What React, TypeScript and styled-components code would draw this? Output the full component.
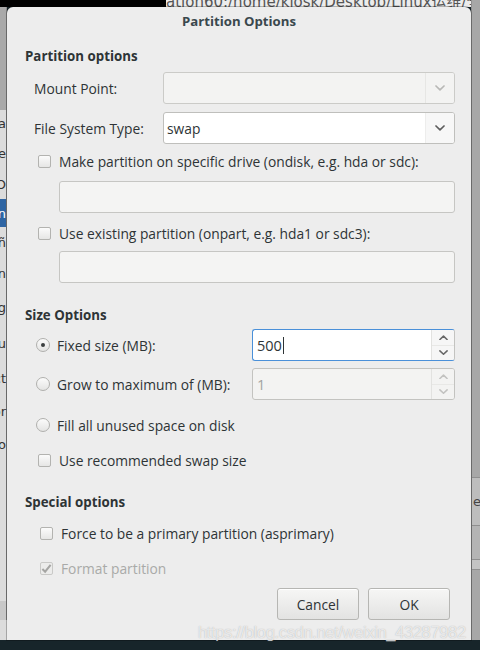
import React from 'react';
import styled, { createGlobalStyle, css } from 'styled-components';

const GlobalStyle = createGlobalStyle`
  html, body {
    margin: 0;
    padding: 0;
    background: #17252a;
  }
  * {
    box-sizing: border-box;
  }
`;

const Desktop = styled.div`
  position: relative;
  width: 480px;
  height: 650px;
  overflow: hidden;
  background: #17252a;
  font-family: 'Open Sans', 'DejaVu Sans', sans-serif;
  color: #2e3436;
`;

/* windows behind the dialog */
const TopStrip = styled.div`
  position: absolute;
  left: 0;
  top: 0;
  width: 480px;
  height: 7px;
  overflow: hidden;
  background: #ececec;
  display: flex;
`;

const BlackCorner = styled.div`
  width: 166px;
  height: 7px;
  background: #000;
  flex: none;
`;

const BackTitle = styled.div`
  margin-top: -10px;
  font-family: 'DejaVu Sans', 'Noto Sans CJK SC', sans-serif;
  font-size: 15px;
  color: #555;
  white-space: nowrap;
`;

const LeftWindow = styled.div`
  position: absolute;
  left: 0;
  top: 7px;
  width: 7px;
  height: 633px;
  background: #dcdcdc;
  display: flex;
  flex-direction: column;
  overflow: hidden;
  font-family: 'DejaVu Sans', sans-serif;
  font-size: 13px;
`;

const LeftCell = styled.div<{ $h: number; $bg?: string; $fg?: string }>`
  height: ${({ $h }) => $h}px;
  flex: none;
  background: ${({ $bg }) => $bg || 'transparent'};
  color: ${({ $fg }) => $fg || '#333'};
  display: flex;
  align-items: center;
  justify-content: flex-end;
  line-height: 1;
  border-right: 1px solid #8c8c8c;
`;

const RightWindow = styled.div`
  position: absolute;
  left: 471px;
  top: 0;
  width: 9px;
  height: 640px;
  background: #a7a7a7;
  border-left: 1px solid #8e8e8e;
  display: flex;
  flex-direction: column;
`;

const RightCell = styled.div<{ $h: number; $bg?: string }>`
  height: ${({ $h }) => $h}px;
  flex: none;
  background: ${({ $bg }) => $bg || 'transparent'};
  border-bottom: 1px solid #8f8f8f;
  font-family: 'DejaVu Sans', sans-serif;
  font-size: 13px;
  color: #444;
  display: flex;
  align-items: center;
  padding-left: 1px;
`;

/* the dialog itself */
const Dialog = styled.div`
  position: absolute;
  left: 7px;
  top: 7px;
  width: 464px;
  height: 633px;
  background: #ededed;
  border-radius: 6px 6px 0 0;
  box-shadow: 0 0 0 1px rgba(0, 0, 0, 0.25);
  display: flex;
  flex-direction: column;
`;

const TitleBar = styled.div`
  height: 26px;
  flex: none;
  display: flex;
  align-items: center;
  justify-content: center;
  font-family: 'Open Sans', sans-serif;
  font-weight: 700;
  font-size: 13.2px;
  color: #3a484d;
  padding-top: 1px;
`;

const Body = styled.div`
  display: flex;
  flex-direction: column;
  padding: 0 16px 0 18px;
  font-size: 13.8px;
`;

const SectionHeader = styled.div<{ $top: number }>`
  height: 20px;
  margin-top: ${({ $top }) => $top}px;
  display: flex;
  align-items: center;
  font-weight: 700;
  font-size: 13.3px;
  color: #2e3436;
`;

const FieldRow = styled.div<{ $top: number }>`
  height: 32px;
  margin-top: ${({ $top }) => $top}px;
  display: flex;
  align-items: center;
`;

const FieldLabel = styled.div<{ $width: number }>`
  width: ${({ $width }) => $width}px;
  flex: none;
  padding-left: 9px;
`;

const CheckRow = styled.div<{ $top: number; $indent?: number; $disabled?: boolean }>`
  height: 20px;
  margin-top: ${({ $top }) => $top}px;
  padding-left: ${({ $indent }) => $indent ?? 13}px;
  display: flex;
  align-items: center;
  gap: 8px;
  color: ${({ $disabled }) => ($disabled ? '#a9aaa8' : '#2e3436')};
`;

const CheckBox = styled.span<{ $disabled?: boolean }>`
  width: 13px;
  height: 13px;
  flex: none;
  border: 1px solid #b3b3b0;
  border-radius: 2px;
  background: linear-gradient(#fbfbfb, #e6e6e5);
  display: flex;
  align-items: center;
  justify-content: center;
  ${({ $disabled }) =>
    $disabled &&
    css`
      border-color: #c9c9c7;
      background: #ececeb;
    `}
`;

const Radio = styled.span`
  width: 14px;
  height: 14px;
  flex: none;
  border: 1px solid #b0b0ad;
  border-radius: 50%;
  background: linear-gradient(#fbfbfb, #e4e4e3);
  display: flex;
  align-items: center;
  justify-content: center;
  margin-left: -1px;
  margin-right: -1px;
`;

const RadioDot = styled.span`
  width: 4px;
  height: 4px;
  border-radius: 50%;
  background: #3b3f40;
`;

const Combo = styled.div<{ $disabled?: boolean }>`
  flex: 1;
  height: 32px;
  display: flex;
  border: 1px solid #bfbfbc;
  border-radius: 3px;
  background: ${({ $disabled }) => ($disabled ? '#f3f3f2' : '#ffffff')};
  ${({ $disabled }) => $disabled && css`border-color: #cbcbc8;`}
`;

const ComboText = styled.div`
  flex: 1;
  display: flex;
  align-items: center;
  padding-left: 3px;
`;

const ComboButton = styled.div<{ $disabled?: boolean }>`
  width: 29px;
  flex: none;
  border-left: 1px solid ${({ $disabled }) => ($disabled ? '#e6e6e4' : '#ededec')};
  display: flex;
  align-items: center;
  justify-content: center;
  color: ${({ $disabled }) => ($disabled ? '#b8b8b6' : '#5d5d5d')};
  background: ${({ $disabled }) => ($disabled ? '#f3f3f2' : '#f7f7f7')};
  border-radius: 0 2px 2px 0;
`;

const Entry = styled.div<{ $top: number }>`
  height: 32px;
  margin-top: ${({ $top }) => $top}px;
  margin-left: 34px;
  border: 1px solid #c6c6c3;
  border-radius: 3px;
  background: #f4f4f3;
`;

const RadioRow = styled.div<{ $top: number; $h?: number }>`
  height: ${({ $h }) => $h ?? 32}px;
  margin-top: ${({ $top }) => $top}px;
  display: flex;
  align-items: center;
`;

const RadioLabel = styled.div`
  width: 227px;
  flex: none;
  padding-left: 12px;
  display: flex;
  align-items: center;
  gap: 8px;
`;

const Spin = styled.div<{ $focused?: boolean }>`
  flex: 1;
  height: 32px;
  display: flex;
  border-radius: 3px;
  border: 1px solid #c3c3c0;
  background: ${({ $focused }) => ($focused ? '#ffffff' : '#f3f3f2')};
  ${({ $focused }) =>
    $focused &&
    css`
      border-color: #4a90d9 #c3c3c0 #4a90d9 #4a90d9;
    `}
`;

const SpinText = styled.div<{ $disabled?: boolean }>`
  flex: 1;
  display: flex;
  align-items: center;
  padding-left: 4px;
  font-size: 14.5px;
  color: ${({ $disabled }) => ($disabled ? '#a3a3a1' : '#2e3436')};
`;

const Caret = styled.span`
  width: 1px;
  height: 17px;
  background: #2e3436;
  margin-left: 1px;
`;

const SpinButtons = styled.div<{ $disabled?: boolean }>`
  width: 23px;
  flex: none;
  display: flex;
  flex-direction: column;
  border-left: 1px solid #e2e2e0;
  background: ${({ $disabled }) => ($disabled ? '#f3f3f2' : '#f6f6f6')};
  color: ${({ $disabled }) => ($disabled ? '#c2c2c0' : '#666')};
  border-radius: 0 2px 2px 0;
`;

const SpinButton = styled.div`
  flex: 1;
  display: flex;
  align-items: center;
  justify-content: center;
  & + & {
    border-top: 1px solid #e8e8e6;
  }
`;

const ButtonRow = styled.div`
  margin-top: 10px;
  display: flex;
  justify-content: flex-end;
  gap: 9px;
  padding-right: 5px;
`;

const Button = styled.button`
  width: 82px;
  height: 32px;
  font-family: 'Open Sans', sans-serif;
  font-size: 13.8px;
  color: #2e3436;
  border: 1px solid #b6b6b3;
  border-radius: 3px;
  background: linear-gradient(#f6f6f5, #e3e3e2);
  box-shadow: inset 0 1px 0 #ffffff;
  padding: 0;
`;

const Watermark = styled.div`
  position: absolute;
  left: 198px;
  top: 623px;
  font-family: 'Liberation Sans', Arial, sans-serif;
  font-size: 16.5px;
  letter-spacing: -0.35px;
  color: rgba(255, 255, 255, 0.7);
  white-space: nowrap;
  text-shadow: 0 0 1px rgba(110, 110, 110, 0.5);
`;

const Chevron = ({ up = false, size = 10 }: { up?: boolean; size?: number }) => (
  <svg width={size} height={size * 0.6} viewBox="0 0 10 6" fill="none">
    <path
      d={up ? 'M1 5 L5 1.2 L9 5' : 'M1 1 L5 4.8 L9 1'}
      stroke="currentColor"
      strokeWidth="1.7"
      strokeLinecap="round"
      strokeLinejoin="round"
    />
  </svg>
);

const Check = () => (
  <svg width="12" height="11" viewBox="0 0 12 11">
    <path d="M1.5 6 L4.5 9 L10.5 1.5" fill="none" stroke="#a5a5a3" strokeWidth="2.2" />
  </svg>
);

const App = () => {
  return (
    <>
      <GlobalStyle />
      <Desktop>
        <TopStrip>
          <BlackCorner />
          <BackTitle>ation60:/home/kiosk/Desktop/Linux运维/全部资料</BackTitle>
        </TopStrip>

        <LeftWindow>
          <LeftCell $h={103} $bg="#a9a9a9" />
          <LeftCell $h={27}>ra</LeftCell>
          <LeftCell $h={32}>e</LeftCell>
          <LeftCell $h={30}>O</LeftCell>
          <LeftCell $h={28} $bg="#2f65a3" $fg="#fff">n</LeftCell>
          <LeftCell $h={30}>ñ</LeftCell>
          <LeftCell $h={32}>n</LeftCell>
          <LeftCell $h={36}>g</LeftCell>
          <LeftCell $h={36}>gu</LeftCell>
          <LeftCell $h={34}>ct</LeftCell>
          <LeftCell $h={32}>or</LeftCell>
          <LeftCell $h={34}>io</LeftCell>
          <LeftCell $h={140} />
          <LeftCell $h={19} $bg="#c8c8c8" />
        </LeftWindow>

        <RightWindow>
          <RightCell $h={478} />
          <RightCell $h={48} $bg="#bdbdbd">e</RightCell>
          <RightCell $h={34} $bg="#b4b4b4" />
          <RightCell $h={10} $bg="#c3c3c3" />
        </RightWindow>

        <Dialog>
          <TitleBar>Partition Options</TitleBar>
          <Body>
            <SectionHeader $top={13}>Partition options</SectionHeader>

            <FieldRow $top={6}>
              <FieldLabel $width={138}>Mount Point:</FieldLabel>
              <Combo $disabled>
                <ComboText />
                <ComboButton $disabled>
                  <Chevron />
                </ComboButton>
              </Combo>
            </FieldRow>

            <FieldRow $top={8}>
              <FieldLabel $width={138}>File System Type:</FieldLabel>
              <Combo>
                <ComboText>swap</ComboText>
                <ComboButton>
                  <Chevron />
                </ComboButton>
              </Combo>
            </FieldRow>

            <CheckRow $top={7}>
              <CheckBox />
              Make partition on specific drive (ondisk, e.g. hda or sdc):
            </CheckRow>
            <Entry $top={10} />

            <CheckRow $top={10}>
              <CheckBox />
              Use existing partition (onpart, e.g. hda1 or sdc3):
            </CheckRow>
            <Entry $top={8} />

            <SectionHeader $top={22}>Size Options</SectionHeader>

            <RadioRow $top={4}>
              <RadioLabel>
                <Radio>
                  <RadioDot />
                </Radio>
                Fixed size (MB):
              </RadioLabel>
              <Spin $focused>
                <SpinText>
                  500
                  <Caret />
                </SpinText>
                <SpinButtons>
                  <SpinButton>
                    <Chevron up size={9} />
                  </SpinButton>
                  <SpinButton>
                    <Chevron size={9} />
                  </SpinButton>
                </SpinButtons>
              </Spin>
            </RadioRow>

            <RadioRow $top={7}>
              <RadioLabel>
                <Radio />
                Grow to maximum of (MB):
              </RadioLabel>
              <Spin>
                <SpinText $disabled>1</SpinText>
                <SpinButtons $disabled>
                  <SpinButton>
                    <Chevron up size={9} />
                  </SpinButton>
                  <SpinButton>
                    <Chevron size={9} />
                  </SpinButton>
                </SpinButtons>
              </Spin>
            </RadioRow>

            <RadioRow $top={15} $h={20}>
              <RadioLabel>
                <Radio />
                Fill all unused space on disk
              </RadioLabel>
            </RadioRow>

            <CheckRow $top={15}>
              <CheckBox />
              Use recommended swap size
            </CheckRow>

            <SectionHeader $top={22}>Special options</SectionHeader>

            <CheckRow $top={11} $indent={15}>
              <CheckBox />
              Force to be a primary partition (asprimary)
            </CheckRow>

            <CheckRow $top={15} $indent={15} $disabled>
              <CheckBox $disabled>
                <Check />
              </CheckBox>
              Format partition
            </CheckRow>

            <ButtonRow>
              <Button>Cancel</Button>
              <Button>OK</Button>
            </ButtonRow>
          </Body>
        </Dialog>

        <Watermark>https://blog.csdn.net/weixin_43287982</Watermark>
      </Desktop>
    </>
  );
};

export default App;
